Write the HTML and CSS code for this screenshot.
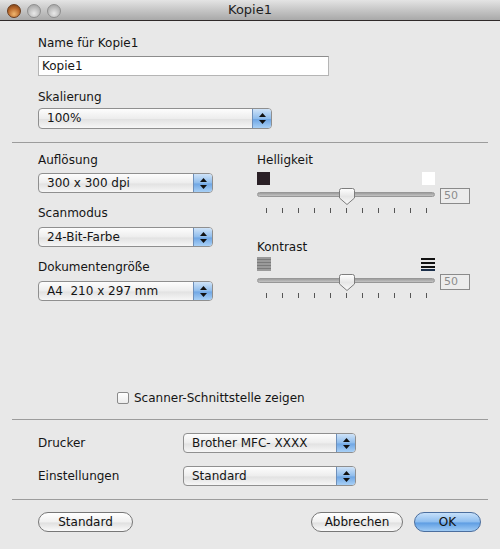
FILE: index.html
```html
<!DOCTYPE html>
<html lang="de">
<head>
  <meta charset="UTF-8">
  <title>Kopie1</title>
  <link rel="stylesheet" href="styles.css">
</head>
<body>
  <div class="window">
    <!-- Titelleiste -->
    <div class="titlebar">
      <div class="lights">
        <span class="light close"></span>
        <span class="light"></span>
        <span class="light"></span>
      </div>
      <div class="title">Kopie1</div>
      <div></div>
    </div>

    <section class="top">
      <div class="label">Name für Kopie1</div>
      <div class="field">Kopie1</div>
      <div class="label gap-13">Skalierung</div>
      <div class="popup popup-scale">
        <span class="popup-text">100%</span>
        <span class="popup-arrows">
          <svg width="7" height="11" viewBox="0 0 7 11"><path d="M3.5 0 L7 4 L0 4 Z M3.5 11 L7 7 L0 7 Z" fill="#111"/></svg>
        </span>
      </div>
    </section>

    <hr class="sep sep-first">

    <section class="options">
      <div class="col-left">
        <div class="label">Auflösung</div>
        <div class="popup popup-mid first">
          <span class="popup-text">300 x 300 dpi</span>
          <span class="popup-arrows"><svg width="7" height="11" viewBox="0 0 7 11"><path d="M3.5 0 L7 4 L0 4 Z M3.5 11 L7 7 L0 7 Z" fill="#111"/></svg></span>
        </div>
        <div class="label gap-12">Scanmodus</div>
        <div class="popup popup-mid">
          <span class="popup-text">24-Bit-Farbe</span>
          <span class="popup-arrows"><svg width="7" height="11" viewBox="0 0 7 11"><path d="M3.5 0 L7 4 L0 4 Z M3.5 11 L7 7 L0 7 Z" fill="#111"/></svg></span>
        </div>
        <div class="label gap-12">Dokumentengröße</div>
        <div class="popup popup-mid">
          <span class="popup-text">A4&nbsp; 210 x 297 mm</span>
          <span class="popup-arrows"><svg width="7" height="11" viewBox="0 0 7 11"><path d="M3.5 0 L7 4 L0 4 Z M3.5 11 L7 7 L0 7 Z" fill="#111"/></svg></span>
        </div>
      </div>

      <div class="col-right">
        <div class="label">Helligkeit</div>
        <div class="swatches">
          <span class="swatch dark"></span>
          <span class="swatch light-sw"></span>
        </div>
        <div class="slider-row">
          <div class="slider">
            <div class="track"></div>
            <svg class="thumb" width="16" height="17" viewBox="0 0 16 17">
              <defs>
                <linearGradient id="tg1" x1="0" y1="0" x2="0" y2="1">
                  <stop offset="0" stop-color="#ffffff"/>
                  <stop offset="0.5" stop-color="#e6e6e6"/>
                  <stop offset="1" stop-color="#fafafa"/>
                </linearGradient>
              </defs>
              <path d="M2.5 0.5 H13.5 Q15.5 0.5 15.5 2.5 V10 L8 16.5 L0.5 10 V2.5 Q0.5 0.5 2.5 0.5 Z" fill="url(#tg1)" stroke="#7d7d7d"/>
            </svg>
          </div>
          <div class="value">50</div>
        </div>
        <div class="ticks">
          <i></i><i></i><i></i><i></i><i></i><i></i><i></i><i></i><i></i><i></i><i></i>
        </div>

        <div class="label gap-26">Kontrast</div>
        <div class="swatches contrast">
          <svg width="14" height="14" viewBox="0 0 14 14">
            <rect x="0" y="0" width="14" height="14" fill="#9a9a9a"/>
            <rect x="0" y="2" width="14" height="1" fill="#7a7a7a"/>
            <rect x="0" y="5" width="14" height="1" fill="#7a7a7a"/>
            <rect x="0" y="8" width="14" height="1" fill="#7a7a7a"/>
            <rect x="0" y="11" width="14" height="1" fill="#7a7a7a"/>
          </svg>
          <svg width="14" height="14" viewBox="0 0 14 14">
            <rect x="0" y="1" width="14" height="2" fill="#111"/>
            <rect x="0" y="5" width="14" height="2" fill="#111"/>
            <rect x="0" y="9" width="14" height="2" fill="#111"/>
            <rect x="0" y="12" width="14" height="2" fill="#1b2f4a"/>
          </svg>
        </div>
        <div class="slider-row">
          <div class="slider">
            <div class="track"></div>
            <svg class="thumb" width="16" height="17" viewBox="0 0 16 17">
              <path d="M2.5 0.5 H13.5 Q15.5 0.5 15.5 2.5 V10 L8 16.5 L0.5 10 V2.5 Q0.5 0.5 2.5 0.5 Z" fill="url(#tg1)" stroke="#7d7d7d"/>
            </svg>
          </div>
          <div class="value">50</div>
        </div>
        <div class="ticks ticks-2">
          <i></i><i></i><i></i><i></i><i></i><i></i><i></i><i></i><i></i><i></i><i></i>
        </div>
      </div>
    </section>

    <div class="check-row">
      <span class="checkbox"></span>
      <span>Scanner-Schnittstelle zeigen</span>
    </div>

    <hr class="sep sep-second">

    <section class="printer">
      <div class="row">
        <div class="row-label">Drucker</div>
        <div class="popup popup-printer">
          <span class="popup-text">Brother MFC- XXXX</span>
          <span class="popup-arrows"><svg width="7" height="11" viewBox="0 0 7 11"><path d="M3.5 0 L7 4 L0 4 Z M3.5 11 L7 7 L0 7 Z" fill="#111"/></svg></span>
        </div>
      </div>
      <div class="row">
        <div class="row-label">Einstellungen</div>
        <div class="popup popup-printer">
          <span class="popup-text">Standard</span>
          <span class="popup-arrows"><svg width="7" height="11" viewBox="0 0 7 11"><path d="M3.5 0 L7 4 L0 4 Z M3.5 11 L7 7 L0 7 Z" fill="#111"/></svg></span>
        </div>
      </div>
    </section>

    <hr class="sep sep-third">

    <div class="buttons">
      <button class="btn btn-default">Standard</button>
      <span class="spacer"></span>
      <button class="btn btn-cancel">Abbrechen</button>
      <button class="btn btn-ok">OK</button>
    </div>
  </div>
</body>
</html>
```

FILE: styles.css
```css
* {
  margin: 0;
  padding: 0;
  box-sizing: border-box;
}
body {
  font-family: "DejaVu Sans", "Liberation Sans", sans-serif;
  font-size: 12px;
  color: #151515;
  background-color: #e8e8e8;
}
.window {
  width: 500px;
  height: 549px;
  background-color: #e8e8e8;
}

/* TITLEBAR */
.titlebar {
  height: 21px;
  display: grid;
  grid-template-columns: 1fr auto 1fr;
  align-items: center;
  background: linear-gradient(#e4e4e4, #c6c6c6 50%, #a9a9a9);
  border-bottom: 1px solid #2f2a2a;
}
.lights {
  display: flex;
  gap: 6px;
  padding-left: 7px;
  padding-top: 1px;
}
.light {
  width: 14px;
  height: 14px;
  border-radius: 50%;
  background: radial-gradient(circle at 50% 70%, #e8e8e8, #b8b8b8 60%, #9a9a9a);
  border: 1px solid #8f8f8f;
}
.light.close {
  background: radial-gradient(circle at 50% 75%, #f0b66e, #b8672a 55%, #6e3a16);
  border-color: #6b3c1c;
}
.title {
  font-size: 13px;
  color: #1e1e1e;
  line-height: 20px;
}

/* COMMON */
.label {
  line-height: 16px;
  height: 16px;
}
.gap-12 { margin-top: 12px; }
.gap-13 { margin-top: 13px; }
.gap-26 { margin-top: 26px; }

.field {
  margin-top: 5px;
  width: 291px;
  height: 20px;
  background: #ffffff;
  border: 1px solid #b5b5b5;
  border-top-color: #8c8c8c;
  padding-left: 3px;
  line-height: 18px;
}

.popup {
  display: flex;
  height: 20px;
  border: 1px solid #8f8f8f;
  border-radius: 4px;
  background: linear-gradient(#fdfdfd, #ededed 50%, #e2e2e2 55%, #f6f6f6);
  overflow: hidden;
}
.popup-text {
  flex: 1;
  padding-left: 8px;
  line-height: 18px;
}
.popup-arrows {
  width: 19px;
  display: flex;
  align-items: center;
  justify-content: center;
  background: linear-gradient(#cfe3f8, #8ebcec 50%, #6fa6e4 55%, #a8d0f6);
  border-left: 1px solid #6e8fb9;
}
.popup-scale {
  margin-top: 3px;
  width: 234px;
  height: 21px;
}
.popup-scale .popup-text {
  line-height: 19px;
}
.popup-mid {
  margin-top: 6px;
  width: 175px;
}
.popup-mid.first {
  margin-top: 5px;
}
.popup-printer {
  width: 173px;
}

.sep {
  border: 0;
  border-top: 1px solid #9c9c9c;
  margin: 0 12px;
  height: 0;
}

/* TOP */
.top {
  padding: 14px 38px 0;
}
.sep-first {
  margin-top: 13px;
}

/* OPTIONS */
.options {
  display: grid;
  grid-template-columns: 219px 1fr;
  padding: 9px 0 0 38px;
}
.swatches {
  display: flex;
  justify-content: space-between;
  width: 178px;
  margin-top: 4px;
}
.swatch {
  width: 13px;
  height: 13px;
}
.swatch.dark {
  background-color: #2a2026;
}
.swatch.light-sw {
  background-color: #ffffff;
}
.swatches.contrast {
  margin-top: 2px;
}
.slider-row {
  display: flex;
  gap: 5px;
  height: 18px;
  margin-top: 2px;
}
.slider {
  position: relative;
  width: 178px;
}
.track {
  margin-top: 5px;
  height: 5px;
  border-radius: 3px;
  background: linear-gradient(#9d9d9d, #c4c4c4);
  border: 1px solid #979797;
}
.thumb {
  position: absolute;
  left: 82px;
  top: 1px;
}
.value {
  width: 30px;
  height: 16px;
  margin-top: 1px;
  border: 1px solid #8a8a8a;
  background: #ececec;
  color: #8c8c8c;
  font-size: 11px;
  line-height: 14px;
  padding-left: 3px;
}
.ticks {
  display: flex;
  justify-content: space-between;
  width: 161px;
  margin: 3px 0 0 9px;
}
.ticks-2 {
  margin-top: 2px;
}
.ticks i {
  width: 1px;
  height: 5px;
  background: #555555;
}

/* CHECKBOX */
.check-row {
  display: flex;
  align-items: center;
  gap: 5px;
  margin-top: 89px;
  padding-left: 117px;
  height: 15px;
}
.checkbox {
  width: 12px;
  height: 12px;
  border: 1px solid #8a8a8a;
  border-radius: 2px;
  background: linear-gradient(#ffffff, #ececec);
}
.sep-second {
  margin-top: 14px;
}

/* PRINTER */
.printer {
  padding: 13px 0 0 38px;
  display: flex;
  flex-direction: column;
  gap: 13px;
}
.row {
  display: grid;
  grid-template-columns: 145px 1fr;
  align-items: center;
}
.sep-third {
  margin-top: 13px;
}

/* BUTTONS */
.buttons {
  display: flex;
  gap: 11px;
  padding: 12px 19px 0 38px;
}
.spacer {
  flex: 1;
}
.btn {
  font-family: "DejaVu Sans", "Liberation Sans", sans-serif;
  font-size: 12px;
  color: #111;
  height: 20px;
  border-radius: 10px;
  border: 1px solid #777777;
  background: linear-gradient(#ffffff, #f0f0f0 50%, #e0e0e0 55%, #fafafa);
}
.btn-default {
  width: 95px;
}
.btn-cancel {
  width: 92px;
}
.btn-ok {
  width: 67px;
  border-color: #4b6e9e;
  background: linear-gradient(#c6e0fa, #8dbdef 50%, #5e9de3 55%, #9fcbf5);
}
```
